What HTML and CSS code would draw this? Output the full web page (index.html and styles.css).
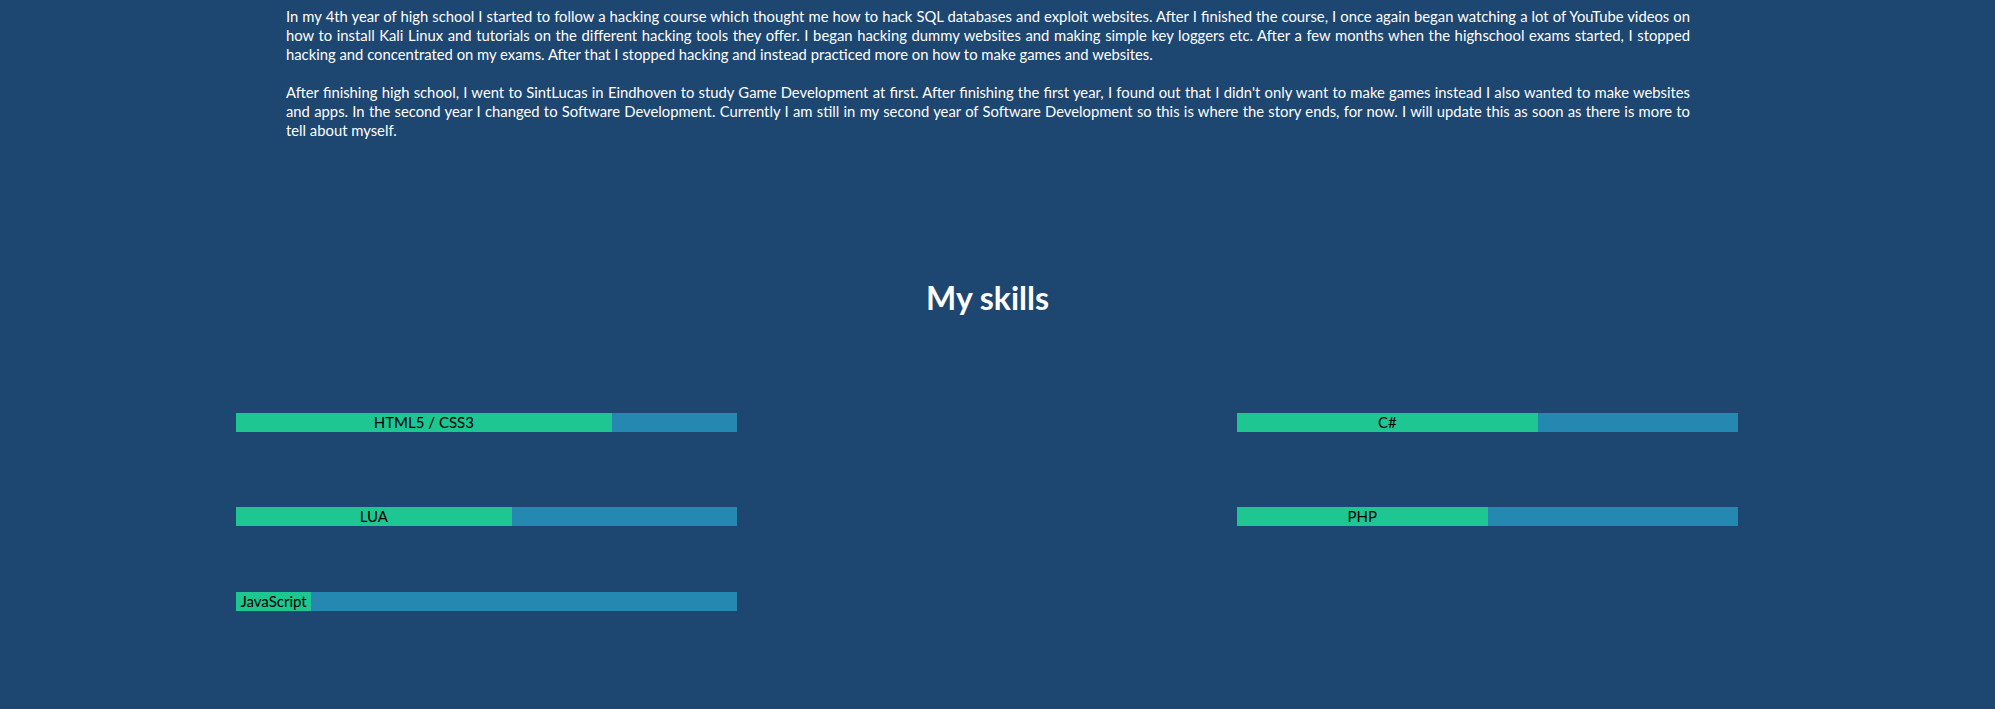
FILE: index.html
```html
<!DOCTYPE html>
<html lang="en">
<head>
<meta charset="utf-8">
<title>About me</title>
<link rel="stylesheet" href="styles.css">
</head>
<body>
<section class="about">
  <p>In my 4th year of high school I started to follow a hacking course which thought me how to hack SQL databases and exploit websites. After I finished the course, I once again began watching a lot of YouTube videos on how to install Kali Linux and tutorials on the different hacking tools they offer. I began hacking dummy websites and making simple key loggers etc. After a few months when the highschool exams started, I stopped hacking and concentrated on my exams. After that I stopped hacking and instead practiced more on how to make games and websites.</p>
  <p>After finishing high school, I went to SintLucas in Eindhoven to study Game Development at first. After finishing the first year, I found out that I didn't only want to make games instead I also wanted to make websites and apps. In the second year I changed to Software Development. Currently I am still in my second year of Software Development so this is where the story ends, for now. I will update this as soon as there is more to tell about myself.</p>
</section>
<section class="skills">
  <h2 class="skills-title">My skills</h2>
  <div class="skills-grid">
    <div class="skills-col">
      <div class="skill"><div class="fill" style="width:75%"><span>HTML5 / CSS3</span></div></div>
      <div class="skill row-2"><div class="fill" style="width:55%"><span>LUA</span></div></div>
      <div class="skill row-3"><div class="fill" style="width:15%"><span>JavaScript</span></div></div>
    </div>
    <div class="skills-col">
      <div class="skill"><div class="fill" style="width:60%"><span>C#</span></div></div>
      <div class="skill row-2"><div class="fill" style="width:50%"><span>PHP</span></div></div>
    </div>
  </div>
</section>
</body>
</html>
```
FILE: styles.css
```css
html, body {
  margin: 0;
  padding: 0;
}
body {
  background: #1d4670;
  color: #ffffff;
  font-family: "Lato", "Open Sans", sans-serif;
  height: 709px;
  overflow: hidden;
}
.about {
  width: 1404px;
  padding: 7px 0 0 286px;
}
.about p {
  margin: 0 0 19px 0;
  font-size: 14.8px;
  line-height: 19px;
  text-align: justify;
}
.skills-title {
  margin: 0;
  padding: 119px 20px 0 0;
  text-align: center;
  font-size: 32px;
  line-height: 40px;
  font-weight: 700;
}
.skills-grid {
  display: grid;
  grid-template-columns: 501px 501px;
  column-gap: 500px;
  padding: 95px 0 0 236px;
}
.skill {
  height: 19px;
  background: #2488b0;
}
.skill.row-2 { margin-top: 75px; }
.skill.row-3 { margin-top: 66px; }
.fill {
  height: 100%;
  background: #1ec692;
  display: flex;
  justify-content: center;
  align-items: center;
  white-space: nowrap;
}
.fill span {
  color: #000000;
  font-size: 15px;
  line-height: 19px;
}
```
